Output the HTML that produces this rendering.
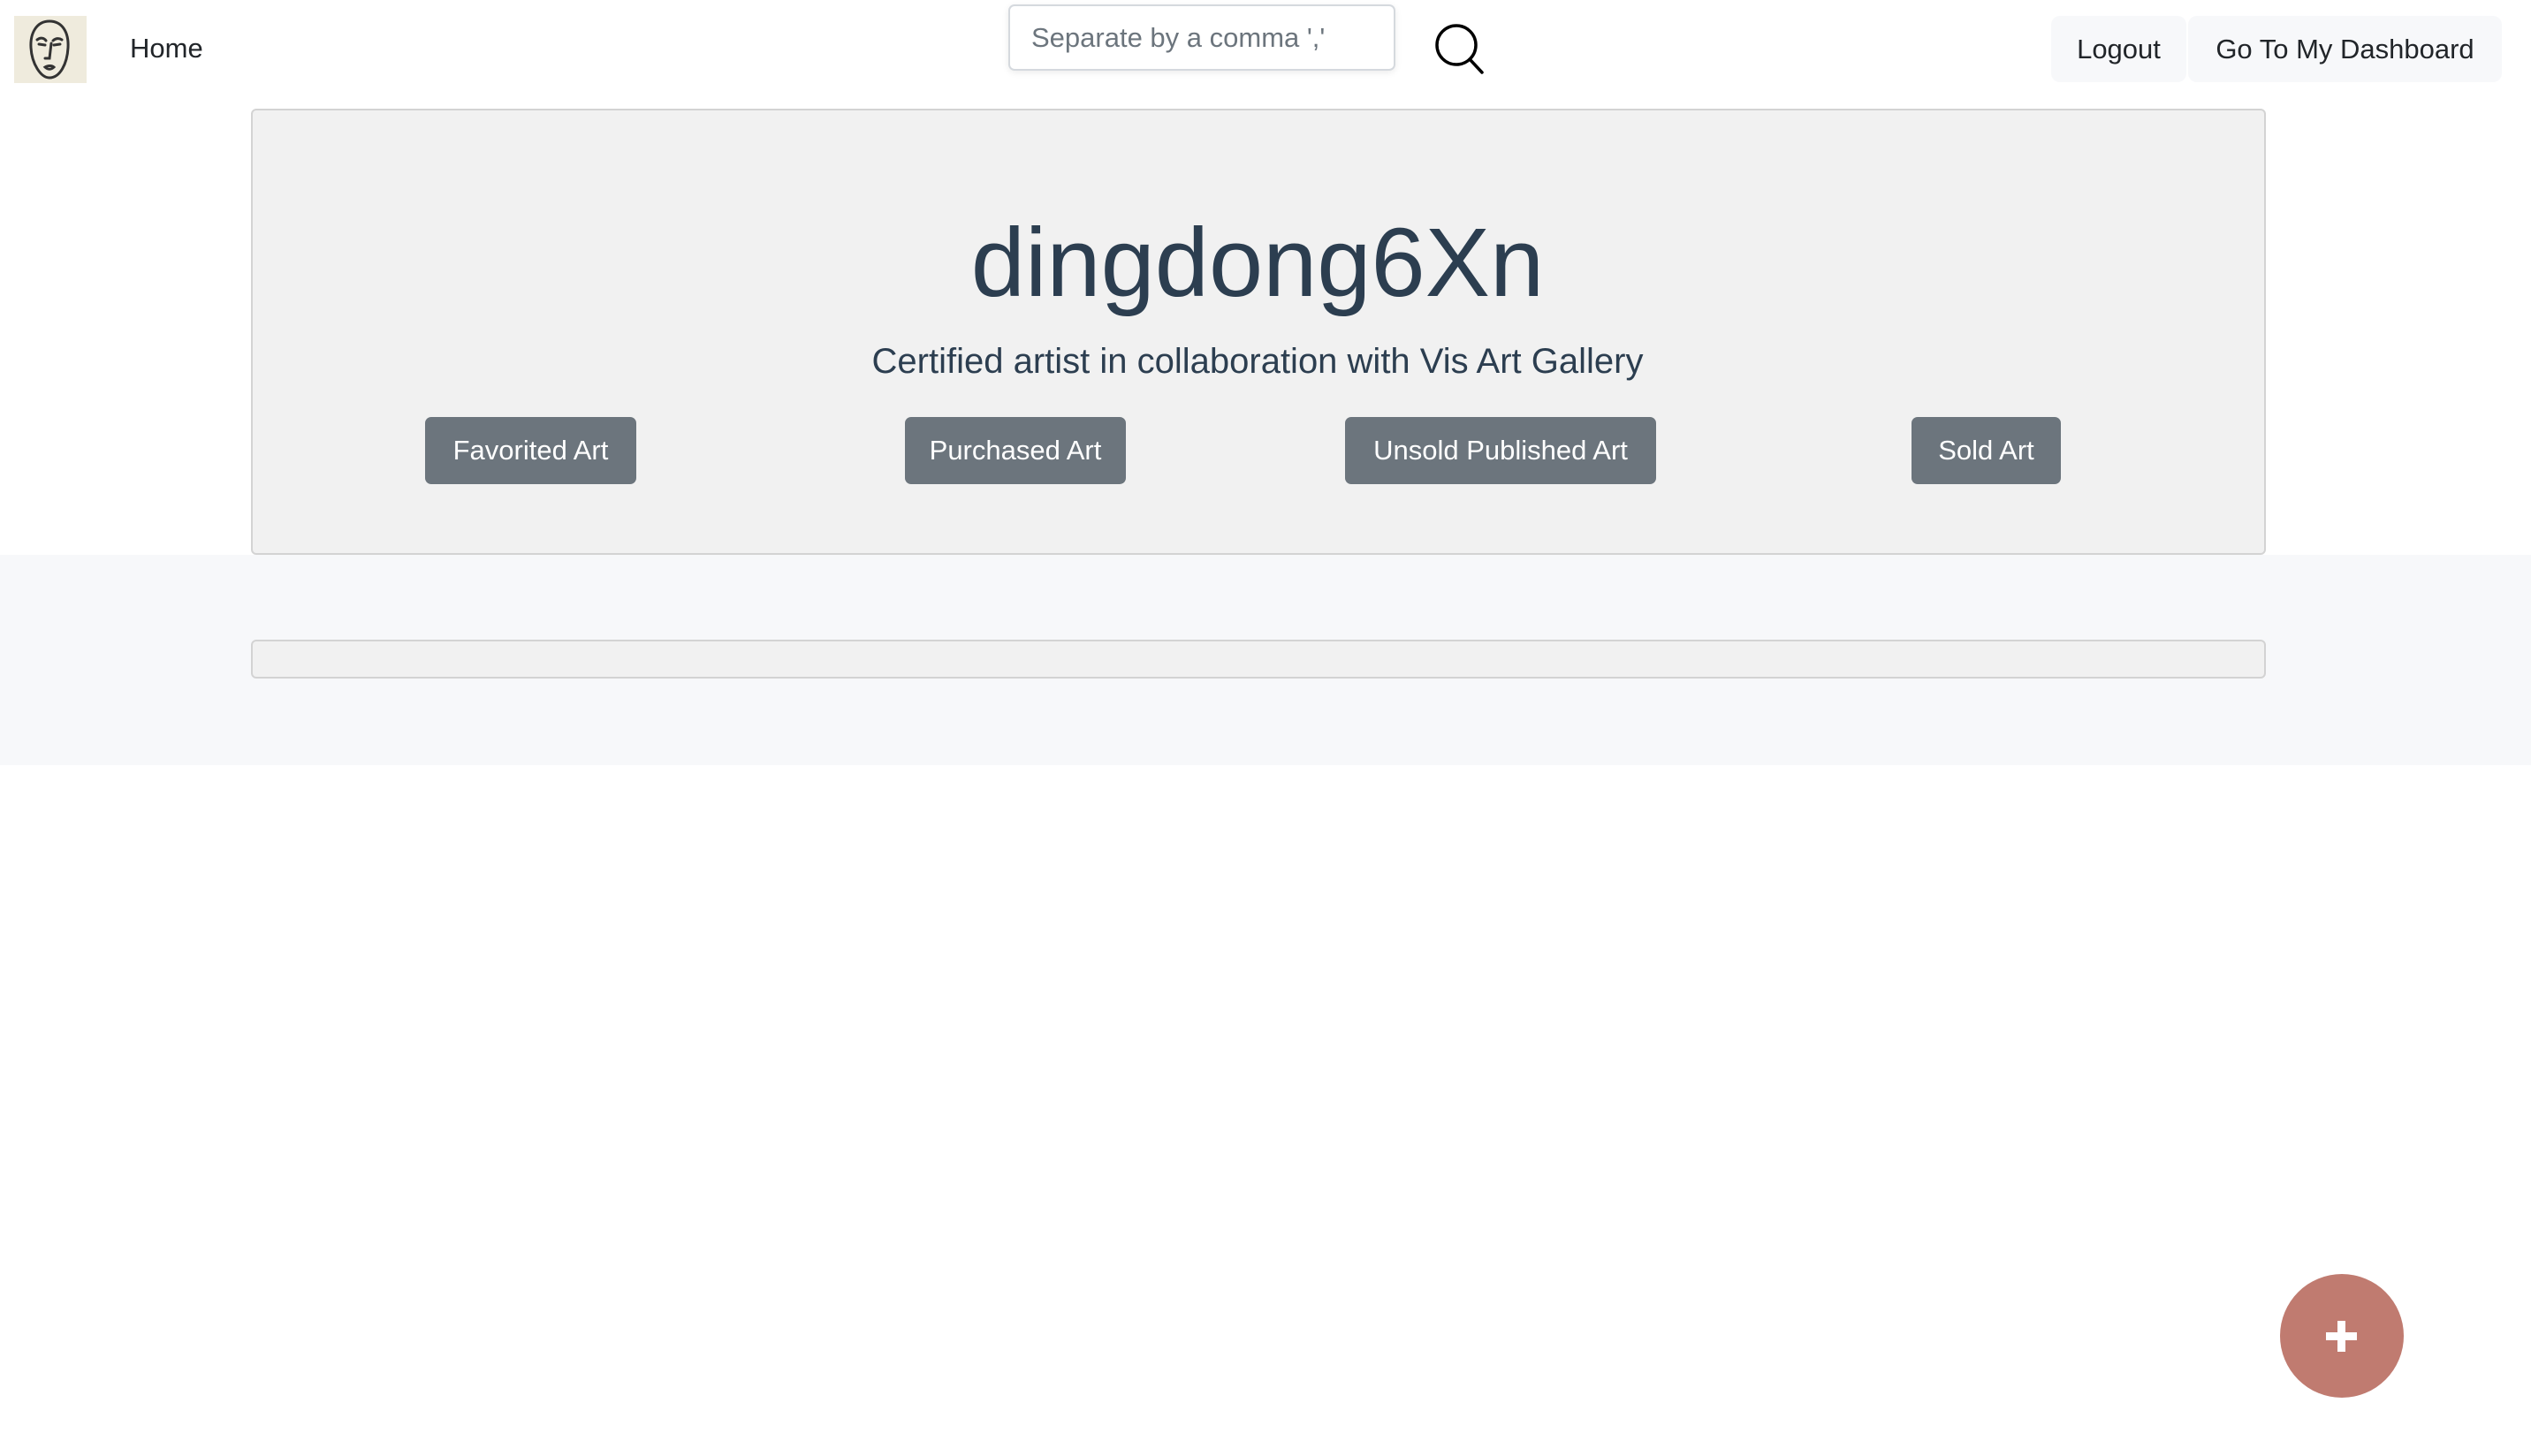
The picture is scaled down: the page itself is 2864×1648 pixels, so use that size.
<!DOCTYPE html>
<html><head><meta charset="utf-8"><style>
*{box-sizing:border-box;margin:0;padding:0}
html,body{width:2864px;height:1648px;background:#fff;font-family:"Liberation Sans",sans-serif;overflow:hidden;position:relative}
.abs{position:absolute}
.nav{color:#212529;font-size:31px}
.hb{position:absolute;top:18px;height:75px;background:#f7f8fa;border-radius:10px;font-size:31px;color:#212529;display:flex;align-items:center;justify-content:center}
.btn{position:absolute;top:472px;height:76px;background:#6c757d;border-radius:7px;color:#fff;font-size:31px;display:flex;align-items:center;justify-content:center}
</style></head><body>
<div class="abs" style="left:16px;top:18px;width:82px;height:76px;background:#efebdd">
<svg width="82" height="76" viewBox="0 0 82 76" fill="none" stroke="#333" stroke-width="3" stroke-linecap="round">
<path d="M40 6 C25 6 18 20 19 36 C20 54 30 70 40 70 C52 70 60 54 61 36 C62 18 54 6 40 6Z"/>
<path d="M26 27 C30 24 34 25 36 28"/><path d="M44 28 C47 25 51 25 54 27"/>
<path d="M28 32 L35 33"/><path d="M45 33 L52 32"/>
<path d="M42 31 L40 48 L35 48"/><path d="M35 58 C38 56 43 56 45 58 C42 61 38 61 35 58Z"/>
</svg></div>
<div class="abs nav" style="left:147px;top:37px">Home</div>
<div class="abs" style="left:1141px;top:5px;width:438px;height:75px;border:2px solid #d5d9de;border-radius:7px;box-shadow:0 2px 8px rgba(0,0,0,0.08);background:#fff;font-size:31px;color:#6c757d;padding:18px 0 0 24px">Separate by a comma ','</div>
<svg class="abs" style="left:1622px;top:27px" width="60" height="58" viewBox="0 0 60 58" fill="none" stroke="#000" stroke-width="3.5">
<circle cx="26" cy="24" r="22"/><path d="M41 40 L55 55" stroke-linecap="round"/></svg>
<div class="hb" style="left:2321px;width:153px">Logout</div>
<div class="hb" style="left:2476px;width:355px">Go To My Dashboard</div>

<div class="abs" style="left:284px;top:123px;width:2280px;height:505px;background:#f1f1f1;border:2px solid #d3d3d3;border-radius:6px"></div>
<div class="abs" style="left:0;top:628px;width:2864px;height:238px;background:#f7f8fa"></div>
<div class="abs" style="left:284px;top:724px;width:2280px;height:44px;background:#f1f1f1;border:2px solid #d3d3d3;border-radius:6px"></div>

<div class="abs" style="left:0;width:2846px;top:228px;text-align:center;font-size:110px;color:#2c3e50;line-height:140px">dingdong6Xn</div>
<div class="abs" style="left:0;width:2846px;top:384px;text-align:center;font-size:40px;color:#2c3e50;line-height:50px">Certified artist in collaboration with Vis Art Gallery</div>

<div class="btn" style="left:481px;width:239px">Favorited Art</div>
<div class="btn" style="left:1024px;width:250px">Purchased Art</div>
<div class="btn" style="left:1522px;width:352px">Unsold Published Art</div>
<div class="btn" style="left:2163px;width:169px">Sold Art</div>

<div class="abs" style="left:2580px;top:1442px;width:140px;height:140px;border-radius:50%;background:#c07b70"></div>
<div class="abs" style="left:2632px;top:1508px;width:35px;height:9px;background:#fff"></div>
<div class="abs" style="left:2645px;top:1495px;width:9px;height:35px;background:#fff"></div>
</body></html>
